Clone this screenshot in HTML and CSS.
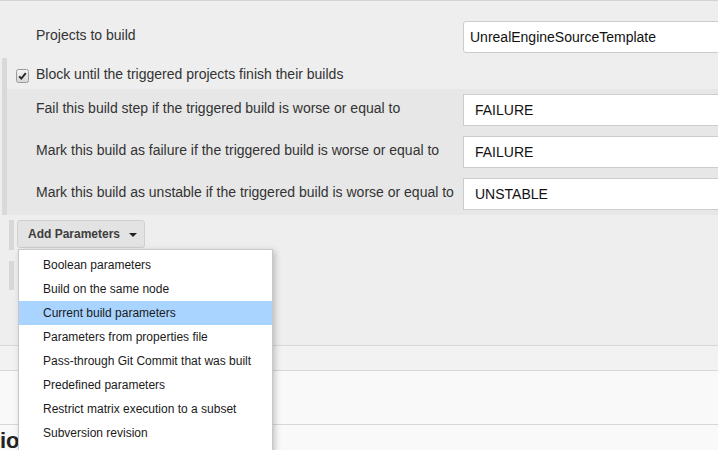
FILE: index.html
```html
<!DOCTYPE html>
<html>
<head>
<meta charset="utf-8">
<link rel="stylesheet" href="styles.css">
</head>
<body>
<div class="page">
  <div class="row top-row">
    <div class="label">Projects to build</div>
    <div class="field text-field">UnrealEngineSourceTemplate</div>
  </div>
  <div class="block">
    <div class="check-row">
      <span class="cb"><svg width="13" height="14" viewBox="0 0 13 14"><defs><linearGradient id="g" x1="0" y1="0" x2="0" y2="1"><stop offset="0" stop-color="#f4f4f4"/><stop offset="1" stop-color="#d6d6d6"/></linearGradient></defs><rect x="0.5" y="0.5" width="12" height="13" rx="2" fill="url(#g)" stroke="#9a9a9a"/><path d="M3.2 7.4 L5.3 9.6 L9.8 4.2" fill="none" stroke="#2a2a2a" stroke-width="2"/></svg></span>
      <span class="label">Block until the triggered projects finish their builds</span>
    </div>
    <div class="nested">
      <div class="row n-row">
        <div class="label">Fail this build step if the triggered build is worse or equal to</div>
        <div class="field select-field">FAILURE</div>
      </div>
      <div class="row n-row">
        <div class="label">Mark this build as failure if the triggered build is worse or equal to</div>
        <div class="field select-field">FAILURE</div>
      </div>
      <div class="row n-row">
        <div class="label">Mark this build as unstable if the triggered build is worse or equal to</div>
        <div class="field select-field">UNSTABLE</div>
      </div>
    </div>
  </div>
  <div class="bar-wrap">
    <div class="btn">Add Parameters<span class="caret"></span></div>
  </div>
  <div class="bar-wrap second"></div>
  <div class="spacer"></div>
  <div class="band band1"></div>
  <div class="band band2"></div>
  <div class="band band3"><div class="heading">ions</div></div>

  <ul class="menu">
    <li>Boolean parameters</li>
    <li>Build on the same node</li>
    <li class="active">Current build parameters</li>
    <li>Parameters from properties file</li>
    <li>Pass-through Git Commit that was built</li>
    <li>Predefined parameters</li>
    <li>Restrict matrix execution to a subset</li>
    <li>Subversion revision</li>
  </ul>
</div>
</body>
</html>
```

FILE: styles.css
```css
html, body {
  margin: 0;
  padding: 0;
  height: 100%;
  overflow: hidden;
  background: #f9f9f9;
}
.page {
  position: relative;
  width: 718px;
  height: 450px;
  overflow: hidden;
  background: #eeeeee;
  border-top: 1px solid #d2d2d2;
  box-sizing: border-box;
  font-family: "Liberation Sans", Arial, sans-serif;
  color: #333;
}
.row {
  display: grid;
  align-items: start;
}
.label {
  font-size: 14px;
  line-height: 16px;
  color: #333;
  white-space: nowrap;
}
.top-row {
  grid-template-columns: 463px 300px;
  padding: 20px 0 5px 0;
  height: 57px;
  box-sizing: border-box;
}
.top-row .label {
  padding: 6px 0 0 36px;
}
.field {
  height: 32px;
  box-sizing: border-box;
  border: 1px solid #cccccc;
  background: #fff;
  font-size: 14px;
  line-height: 16px;
  padding-top: 7px;
  color: #111;
  white-space: nowrap;
}
.text-field {
  border-radius: 3px;
  padding-left: 6px;
}
.select-field {
  padding-left: 11px;
}
.block {
  margin-left: 2px;
  border-left: 5px solid #d9d9d9;
}
.check-row {
  display: flex;
  align-items: flex-start;
  height: 31px;
  box-sizing: border-box;
  padding: 8px 0 0 9px;
}
.cb {
  display: block;
  width: 13px;
  height: 14px;
  margin: 3px 7px 0 0;
}
.cb svg {
  display: block;
}
.nested {
  background: #e7e7e7;
  padding: 5px 0;
  display: flex;
  flex-direction: column;
  gap: 10px;
}
.n-row {
  grid-template-columns: 456px 300px;
}
.n-row .label {
  padding: 6px 0 0 29px;
}
.bar-wrap {
  margin: 5px 0 0 9px;
  border-left: 5px solid #d8d8d8;
  height: 30px;
  padding-left: 3px;
}
.bar-wrap.second {
  margin-top: 11px;
  height: 29px;
}
.btn {
  display: inline-flex;
  align-items: center;
  height: 28px;
  box-sizing: border-box;
  width: 128px;
  padding: 0 0 0 10px;
  background: #e3e3e3;
  border: 1px solid #d0d0d0;
  border-radius: 3px;
  font-size: 12px;
  font-weight: bold;
  color: #3d3d3d;
}
.caret {
  display: block;
  width: 0;
  height: 0;
  margin: 2px 0 0 9px;
  border-left: 4px solid transparent;
  border-right: 4px solid transparent;
  border-top: 4px solid #222;
}
.spacer {
  height: 55px;
}
.band {
  border-top: 1px solid #d8d8d8;
}
.band1 {
  background: #f2f2f2;
  height: 24px;
}
.band2 {
  background: #f9f9f9;
  height: 53px;
}
.band3 {
  background: #f9f9f9;
  height: 40px;
  padding-top: 3px;
}
.heading {
  font-size: 22px;
  font-weight: bold;
  color: #222;
  line-height: 25px;
  padding-left: 0;
}
.menu {
  position: absolute;
  left: 18px;
  top: 248px;
  width: 255px;
  box-sizing: border-box;
  margin: 0;
  padding: 3px 0 10px 0;
  list-style: none;
  background: #fff;
  border: 1px solid #c8c8c8;
  box-shadow: 2px 2px 6px rgba(0, 0, 0, 0.22);
}
.menu li {
  height: 24px;
  line-height: 24px;
  padding-left: 24px;
  font-size: 12px;
  color: #1a1a1a;
  white-space: nowrap;
}
.menu li.active {
  background: #a8d4ff;
}
```
